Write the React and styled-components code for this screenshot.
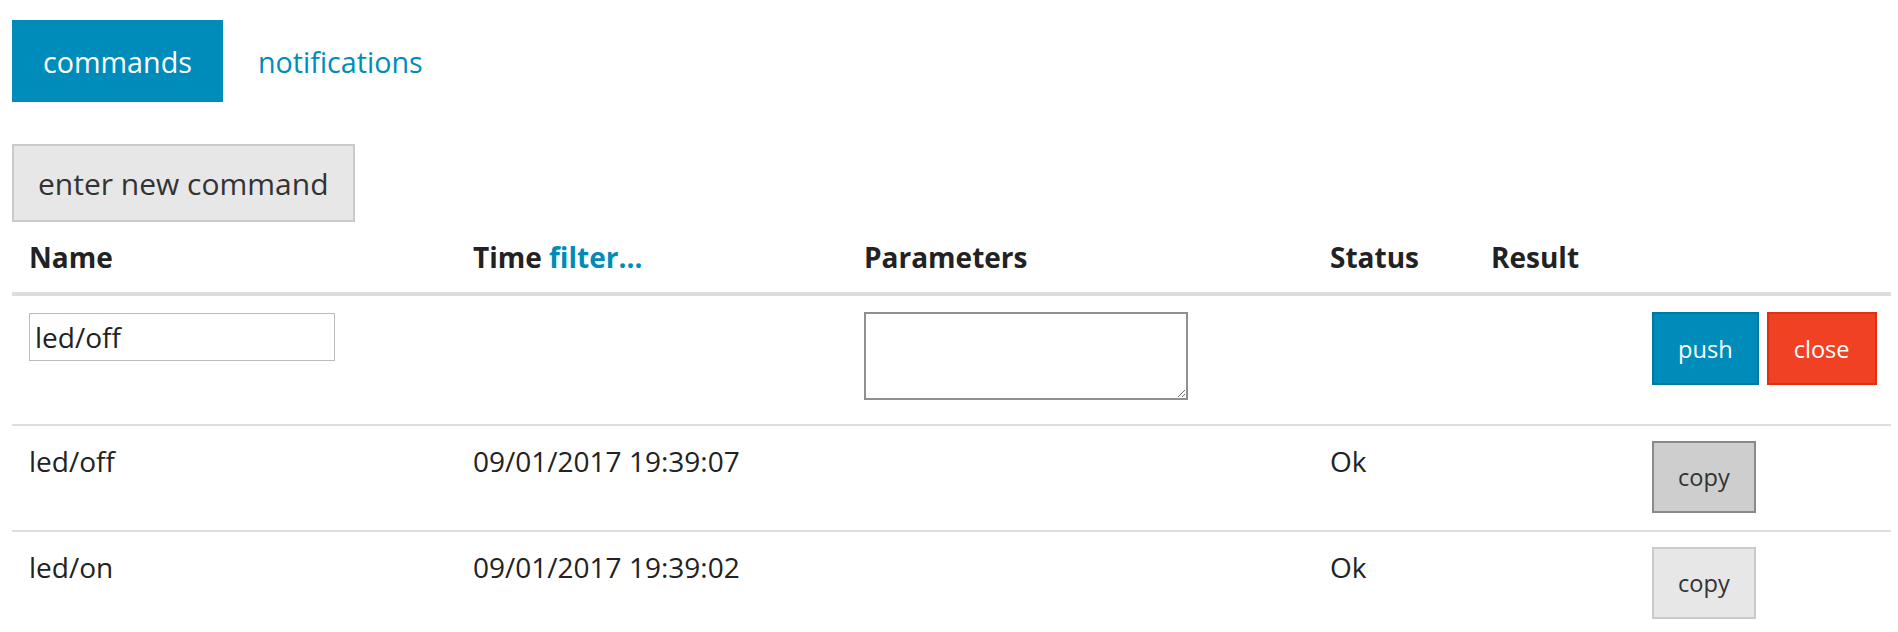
import React from 'react'
import styled, { createGlobalStyle } from 'styled-components'

const GlobalStyle = createGlobalStyle`
  html, body {
    margin: 0;
    padding: 0;
    background: #fff;
  }
  body {
    font-family: "Open Sans", "Liberation Sans", sans-serif;
    color: #222;
  }
`

const Page = styled.div`
  padding: 20px 7px 0 12px;
`

const Tabs = styled.div`
  display: flex;
  gap: 4px;
`

const Tab = styled.div`
  height: 82px;
  padding: 0 31px;
  display: flex;
  align-items: center;
  font-size: 28.7px;
  background: ${p => (p.active ? '#008cba' : 'transparent')};
  color: ${p => (p.active ? '#fff' : '#008cba')};
  cursor: pointer;
`

const NewButton = styled.button`
  margin-top: 42px;
  height: 78px;
  padding: 0 24px;
  font-family: inherit;
  font-size: 30px;
  color: #333;
  background: #e7e7e7;
  border: 2px solid #cacaca;
  display: block;
`

const cols = '444px 391px 466px 161px 161px 1fr'

const HeadRow = styled.div`
  display: grid;
  grid-template-columns: ${cols};
  border-bottom: 4px solid #ddd;
`

const HeadCell = styled.div`
  padding: 15px 17px;
  font-size: 28px;
  line-height: 40px;
  font-weight: 700;
  white-space: nowrap;
`

const FilterLink = styled.a`
  color: #008cba;
  text-decoration: none;
`

const Row = styled.div`
  display: grid;
  grid-template-columns: ${cols};
  align-items: start;
  padding: ${p => p.pad || '15px 0 17px'};
  border-bottom: 2px solid #ddd;
`

const Cell = styled.div`
  padding: 0 17px;
  font-size: 28px;
  line-height: 40px;
  white-space: nowrap;
`

const Actions = styled(Cell)`
  display: flex;
  gap: 8px;
`

const NameInput = styled.input`
  box-sizing: border-box;
  margin-top: 1px;
  width: 306px;
  height: 48px;
  padding: 0 5px;
  font-family: inherit;
  font-size: 28px;
  color: #222;
  border: 1px solid #bbb;
  outline: none;
`

const ParamsArea = styled.textarea`
  box-sizing: border-box;
  display: block;
  width: 324px;
  height: 88px;
  border: 2px solid #909090;
  font-family: inherit;
  font-size: 28px;
  outline: none;
`

const kinds = {
  primary: { bg: '#008cba', border: '#0079a1', color: '#fff' },
  alert: { bg: '#f04124', border: '#e2300f', color: '#fff' },
  secondary: { bg: '#e7e7e7', border: '#cacaca', color: '#333' },
  hover: { bg: '#cecece', border: '#8a8a8a', color: '#333' },
}

const SmallButton = styled.button`
  box-sizing: border-box;
  height: ${p => (p.tall ? '73px' : '72px')};
  padding: 0 ${p => (p.wide ? '25px' : '24px')};
  font-family: inherit;
  font-size: 23.6px;
  background: ${p => kinds[p.kind].bg};
  border: 2px solid ${p => kinds[p.kind].border};
  color: ${p => kinds[p.kind].color};
  cursor: pointer;
`

const history = [
  { name: 'led/off', time: '09/01/2017 19:39:07', params: '', status: 'Ok', result: '', hover: true },
  { name: 'led/on', time: '09/01/2017 19:39:02', params: '', status: 'Ok', result: '' },
]

export default function App() {
  return (
    <Page>
      <GlobalStyle />
      <Tabs>
        <Tab active>commands</Tab>
        <Tab>notifications</Tab>
      </Tabs>
      <NewButton>enter new command</NewButton>

      <HeadRow>
        <HeadCell>Name</HeadCell>
        <HeadCell>
          Time <FilterLink href="#">filter...</FilterLink>
        </HeadCell>
        <HeadCell>Parameters</HeadCell>
        <HeadCell>Status</HeadCell>
        <HeadCell>Result</HeadCell>
        <HeadCell />
      </HeadRow>

      <Row pad="16px 0 24px">
        <Cell>
          <NameInput defaultValue="led/off" />
        </Cell>
        <Cell />
        <Cell>
          <ParamsArea />
        </Cell>
        <Cell />
        <Cell />
        <Actions>
          <SmallButton kind="primary" tall>push</SmallButton>
          <SmallButton kind="alert" tall wide>close</SmallButton>
        </Actions>
      </Row>

      {history.map((cmd, i) => (
        <Row key={i}>
          <Cell>{cmd.name}</Cell>
          <Cell>{cmd.time}</Cell>
          <Cell>{cmd.params}</Cell>
          <Cell>{cmd.status}</Cell>
          <Cell>{cmd.result}</Cell>
          <Actions>
            <SmallButton kind={cmd.hover ? 'hover' : 'secondary'}>copy</SmallButton>
          </Actions>
        </Row>
      ))}
    </Page>
  )
}
